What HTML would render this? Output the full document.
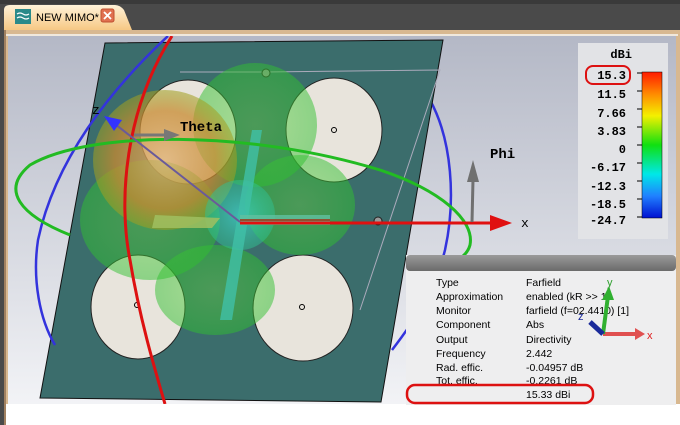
<!DOCTYPE html>
<html><head><style>
html,body{margin:0;padding:0;width:680px;height:425px;overflow:hidden;background:#fff}
svg{display:block}
</style></head><body>
<svg width="680" height="425" viewBox="0 0 680 425" xmlns="http://www.w3.org/2000/svg" font-family="Liberation Sans, sans-serif">
<defs>
<linearGradient id="bg" x1="0" y1="0" x2="0" y2="1"><stop offset="0" stop-color="#b4b8c6"/><stop offset="1" stop-color="#f2f3f6"/></linearGradient>
<linearGradient id="tab" x1="0" y1="0" x2="0" y2="1"><stop offset="0" stop-color="#fff2d8"/><stop offset="1" stop-color="#f6c884"/></linearGradient>
<linearGradient id="cb" x1="0" y1="0" x2="0" y2="1"><stop offset="0" stop-color="#ff1a00"/><stop offset=".15" stop-color="#ff8a00"/><stop offset=".3" stop-color="#f4f000"/><stop offset=".5" stop-color="#10e010"/><stop offset=".7" stop-color="#00e8e8"/><stop offset=".85" stop-color="#2080ff"/><stop offset="1" stop-color="#0010d0"/></linearGradient>
<linearGradient id="hdr" x1="0" y1="0" x2="0" y2="1"><stop offset="0" stop-color="#9a9a9a"/><stop offset="1" stop-color="#6a6a6a"/></linearGradient>
<radialGradient id="og" cx=".5" cy=".5" r=".5"><stop offset="0" stop-color="#e0b070" stop-opacity=".8"/><stop offset=".7" stop-color="#c88a30" stop-opacity=".75"/><stop offset="1" stop-color="#a0a020" stop-opacity=".55"/></radialGradient>
<radialGradient id="gg" cx=".5" cy=".5" r=".5"><stop offset="0" stop-color="#60d040" stop-opacity=".45"/><stop offset="1" stop-color="#30c030" stop-opacity=".5"/></radialGradient>
<radialGradient id="cg" cx=".5" cy=".5" r=".5"><stop offset="0" stop-color="#40d8d0" stop-opacity=".7"/><stop offset="1" stop-color="#30c090" stop-opacity=".5"/></radialGradient>
<clipPath id="vp"><rect x="8" y="36" width="668" height="368"/></clipPath>
</defs>
<rect width="680" height="425" fill="#fff"/>
<rect width="680" height="30" fill="#4a4a4a"/>
<rect x="0" y="0" width="680" height="4" fill="#3a3a3a"/>
<path d="M4 30 L4 10 Q4 5 10 5 L115 5 Q120 5 124 10 L132 30 Z" fill="url(#tab)"/>
<rect x="15" y="9" width="16" height="15" fill="#2a8a8a"/>
<path d="M17 14 q3 -2 6 0 t6 0 M17 18 q3 -2 6 0 t6 0" stroke="#fff" stroke-width="1.2" fill="none"/>
<text x="36" y="21" font-size="11" fill="#000">NEW MIMO*</text>
<rect x="101" y="9" width="13" height="13" rx="2" fill="#e07050" stroke="#c05030"/>
<path d="M104 12 L111 19 M111 12 L104 19" stroke="#fff" stroke-width="1.8"/>
<rect x="0" y="30" width="680" height="375" fill="#d8b890"/>
<rect x="0" y="30" width="4" height="395" fill="#4a4a4a"/>
<rect x="8" y="36" width="668" height="368" fill="url(#bg)"/>
<rect x="6" y="34" width="672" height="2" fill="#f0e8dc"/>
<rect x="4" y="404" width="676" height="21" fill="#fff"/>
<rect x="4" y="30" width="2" height="395" fill="#a08060"/>
<g clip-path="url(#vp)">
<!-- back ring parts -->
<path d="M430 100 C452 140 456 200 445 250 C435 290 415 320 392 350" fill="none" stroke="#3333dd" stroke-width="2.5"/>
<!-- board -->
<polygon points="105,43 443,40 381,402 40,398" fill="#3b6d6c" stroke="#111" stroke-width="1"/>
<ellipse cx="188" cy="132" rx="48" ry="52" fill="#e8e4dc" stroke="#222"/>
<ellipse cx="334" cy="130" rx="48" ry="52" fill="#e8e4dc" stroke="#222"/>
<ellipse cx="138" cy="307" rx="47" ry="52" fill="#e8e4dc" stroke="#222"/>
<ellipse cx="303" cy="308" rx="50" ry="53" fill="#e8e4dc" stroke="#222"/>
<circle cx="334" cy="130" r="2.5" fill="none" stroke="#000"/>
<circle cx="137" cy="305" r="2.5" fill="none" stroke="#000"/>
<circle cx="302" cy="307" r="2.5" fill="none" stroke="#000"/>
<polyline points="180,72 265,72 440,70 360,310" fill="none" stroke="#aab" stroke-width="1"/>
<circle cx="266" cy="73" r="4" fill="#999" stroke="#222"/>
<circle cx="378" cy="221" r="4" fill="#999" stroke="#222"/>
<!-- lobes -->
<ellipse cx="215" cy="290" rx="60" ry="45" fill="url(#gg)"/>
<ellipse cx="300" cy="205" rx="55" ry="50" fill="url(#gg)"/>
<ellipse cx="255" cy="125" rx="62" ry="62" fill="url(#gg)"/>
<ellipse cx="150" cy="220" rx="70" ry="60" fill="url(#gg)"/>
<ellipse cx="165" cy="160" rx="72" ry="70" fill="url(#og)"/>
<ellipse cx="240" cy="215" rx="35" ry="35" fill="url(#cg)"/>
<polygon points="252,130 262,130 232,320 220,320" fill="#40c0a8" opacity=".8"/>
<polygon points="155,215 220,218 212,228 152,228" fill="#a0c060" opacity=".85"/>
<polygon points="240,215 330,215 330,225 240,225" fill="#60c0a0" opacity=".8"/>
<line x1="240" y1="220" x2="330" y2="220" stroke="#905030" stroke-width="2"/>
<!-- rings front -->
<path d="M168 36 C110 90 55 160 38 240 C32 280 40 320 55 345" fill="none" stroke="#3333dd" stroke-width="2.5"/>
<path d="M172 36 C125 110 118 200 130 260 C140 320 155 370 165 404" fill="none" stroke="#dd1111" stroke-width="3"/>
<path d="M70 235 C20 215 0 190 30 165 C90 130 250 130 380 170 C440 190 475 220 470 245 C466 260 450 265 420 270" fill="none" stroke="#22bb22" stroke-width="3"/>
<path d="M410 290 L440 290" fill="none" stroke="#22bb22" stroke-width="3"/>
</g>
<!-- axes -->
<line x1="240" y1="222" x2="115" y2="124" stroke="#6a5a9a" stroke-width="2"/>
<polygon points="104,116 122,120 114,131" fill="#3333ff"/>
<text x="92" y="114" font-family="Liberation Mono, monospace" font-size="13">z</text>
<line x1="134" y1="135" x2="168" y2="135" stroke="#777" stroke-width="3"/>
<polygon points="180,135 164,129 164,141" fill="#777"/>
<text x="180" y="131" font-family="Liberation Mono, monospace" font-size="14" font-weight="bold">Theta</text>
<line x1="240" y1="223" x2="495" y2="223" stroke="#e01010" stroke-width="3"/>
<polygon points="512,223 490,215 490,231" fill="#e01010"/>
<text x="521" y="227" font-family="Liberation Mono, monospace" font-size="13">x</text>
<line x1="472" y1="222" x2="473" y2="180" stroke="#707070" stroke-width="3"/>
<polygon points="473,160 467,182 479,182" fill="#707070"/>
<text x="490" y="158" font-family="Liberation Mono, monospace" font-size="14" font-weight="bold">Phi</text>
<!-- legend -->
<rect x="578" y="43" width="90" height="196" fill="#e2e3e6"/>
<rect x="642" y="72" width="20" height="146" fill="url(#cb)" stroke="#000" stroke-width=".5"/>
<g font-family="Liberation Mono, DejaVu Sans Mono, monospace" font-size="12" font-weight="bold" text-anchor="end">
<text x="632" y="58">dBi</text>
<text x="626" y="79">15.3</text>
<text x="626" y="98">11.5</text>
<text x="626" y="117">7.66</text>
<text x="626" y="135">3.83</text>
<text x="626" y="153">0</text>
<text x="626" y="171">-6.17</text>
<text x="626" y="190">-12.3</text>
<text x="626" y="208">-18.5</text>
<text x="626" y="224">-24.7</text>
</g>
<g stroke="#000"><line x1="637" y1="73" x2="642" y2="73"/><line x1="637" y1="91" x2="642" y2="91"/><line x1="637" y1="109" x2="642" y2="109"/><line x1="637" y1="127" x2="642" y2="127"/><line x1="637" y1="145" x2="642" y2="145"/><line x1="637" y1="163" x2="642" y2="163"/><line x1="637" y1="181" x2="642" y2="181"/><line x1="637" y1="199" x2="642" y2="199"/><line x1="637" y1="217" x2="642" y2="217"/></g>
<rect x="586" y="66" width="44" height="18" rx="7" fill="none" stroke="#dd1111" stroke-width="2"/>
<!-- info panel -->
<rect x="406" y="255" width="270" height="150" fill="#eeeeef"/>
<rect x="406" y="255" width="270" height="16" rx="4" fill="url(#hdr)"/>
<g font-size="10.5" fill="#000">
<text x="436" y="286">Type</text><text x="526" y="286">Farfield</text>
<text x="436" y="300">Approximation</text><text x="526" y="300">enabled (kR &gt;&gt; 1)</text>
<text x="436" y="314">Monitor</text><text x="526" y="314">farfield (f=02.4410) [1]</text>
<text x="436" y="328">Component</text><text x="526" y="328">Abs</text>
<text x="436" y="343">Output</text><text x="526" y="343">Directivity</text>
<text x="436" y="357">Frequency</text><text x="526" y="357">2.442</text>
<text x="436" y="371">Rad. effic.</text><text x="526" y="371">-0.04957 dB</text>
<text x="436" y="384">Tot. effic.</text><text x="526" y="384">-0.2261 dB</text>
<text x="526" y="398">15.33 dBi</text>
</g>
<rect x="407" y="385" width="186" height="18" rx="8" fill="none" stroke="#dd1111" stroke-width="2.5"/>
<!-- axis icon -->
<line x1="603" y1="334" x2="640" y2="334" stroke="#e05050" stroke-width="4"/>
<polygon points="645,334 635,328 635,340" fill="#e05050"/>
<text x="647" y="339" font-size="11" fill="#e02020">x</text>
<line x1="603" y1="334" x2="608" y2="296" stroke="#30b030" stroke-width="4"/>
<polygon points="609,286 602,300 614,300" fill="#30b030"/>
<text x="607" y="286" font-size="11" fill="#30a030">y</text>
<line x1="603" y1="334" x2="590" y2="322" stroke="#1a2a9a" stroke-width="5"/>
<text x="578" y="320" font-size="11" fill="#1a2a9a">z</text>
</svg>
</body></html>
